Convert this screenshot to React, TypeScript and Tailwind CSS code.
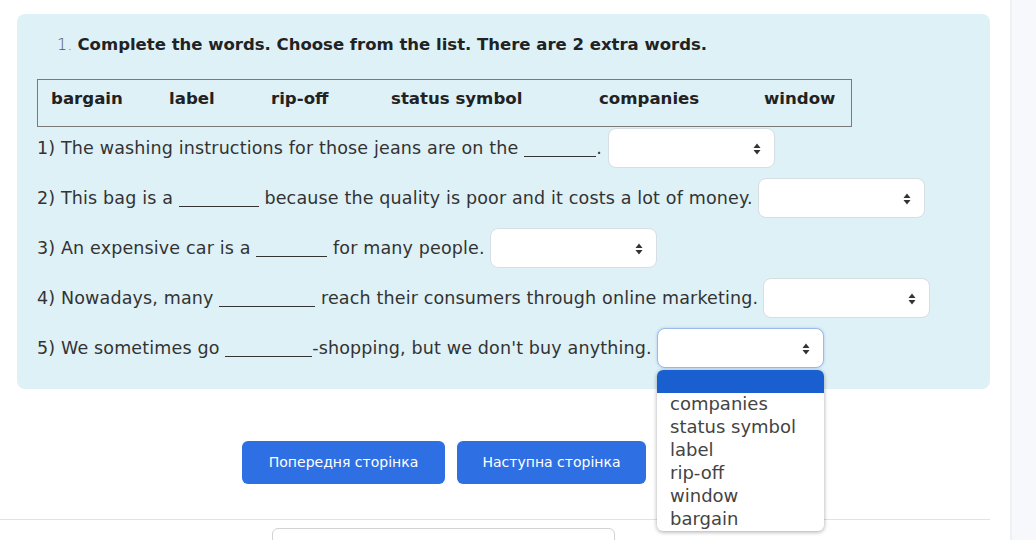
import React from "react";

const words = [
  { w: "bargain", width: "w-[118px]" },
  { w: "label", width: "w-[102px]" },
  { w: "rip-off", width: "w-[120px]" },
  { w: "status symbol", width: "w-[208px]" },
  { w: "companies", width: "w-[165px]" },
  { w: "window", width: "w-[74px]" },
];

function Arrows() {
  return (
    <svg width="8" height="12" viewBox="0 0 8 12" className="absolute right-[13px] top-[14px]">
      <path d="M4 0.5 L7.5 5 L0.5 5 Z" fill="#333" />
      <path d="M4 11.5 L7.5 7 L0.5 7 Z" fill="#333" />
    </svg>
  );
}

function Select({ focused = false }: { focused?: boolean }) {
  return (
    <span
      className={
        "relative inline-block shrink-0 w-[167px] h-[40px] rounded-lg bg-white align-middle border " +
        (focused ? "border-[#9fb9e6] shadow-[0_0_3px_rgba(80,130,220,0.35)]" : "border-[#d6dde3]")
      }
    >
      <Arrows />
    </span>
  );
}

function Blank({ w }: { w: string }) {
  return <span className={"inline-block shrink-0 border-b border-[#333] h-[18px] " + w}></span>;
}

export default function App() {
  return (
    <div className="relative w-[1036px] h-[540px] overflow-hidden bg-white flex font-['DejaVu_Sans',sans-serif] text-[#333]">
      <div className="w-[1010px] shrink-0 pt-[14px]">
        <div className="ml-[17px] w-[973px] h-[375px] rounded-lg bg-[#def1f7] px-5 pt-[22px]">
          <div className="pl-5 text-[16.5px] leading-[18px] whitespace-nowrap">
            <span className="font-light text-[#555] text-[16px]">1.</span>{" "}
            <span className="font-bold text-[#222]">Complete the words. Choose from the list. There are 2 extra words.</span>
          </div>
          <div className="mt-[25px] w-[815px] h-[48px] border border-[#7a7a7a] flex items-start pt-[9px] leading-[20px] pl-[13px] font-bold text-[16.6px] text-[#222] whitespace-nowrap">
            {words.map((x) => (
              <span key={x.w} className={x.width}>{x.w}</span>
            ))}
          </div>
          <div className="text-[17.5px] tracking-[0.15px] mt-[-4px] whitespace-nowrap">
            <div className="h-[50px] flex items-center">
              <span>1) The washing instructions for those jeans are on the&nbsp;</span>
              <Blank w="w-[72px]" />
              <span className="mr-[6px]">.</span>
              <Select />
            </div>
            <div className="h-[50px] flex items-center">
              <span>2) This bag is a&nbsp;</span>
              <Blank w="w-[80px]" />
              <span className="mr-[5px]">&nbsp;because the quality is poor and it costs a lot of money.</span>
              <Select />
            </div>
            <div className="h-[50px] flex items-center">
              <span>3) An expensive car is a&nbsp;</span>
              <Blank w="w-[71px]" />
              <span className="mr-[5px]">&nbsp;for many people.</span>
              <Select />
            </div>
            <div className="h-[50px] flex items-center">
              <span>4) Nowadays, many&nbsp;</span>
              <Blank w="w-[96px]" />
              <span className="mr-[5px]">&nbsp;reach their consumers through online marketing.</span>
              <Select />
            </div>
            <div className="h-[50px] flex items-center">
              <span>5) We sometimes go&nbsp;</span>
              <Blank w="w-[87px]" />
              <span className="mr-[5px]">-shopping, but we don't buy anything.</span>
              <Select focused />
            </div>
          </div>
        </div>
        <div className="mt-[52px] flex gap-3 pl-[242px]">
          <button className="w-[203px] h-[43px] rounded-md bg-[#2f6fe4] text-white text-[14px]">Попередня сторінка</button>
          <button className="w-[189px] h-[43px] rounded-md bg-[#2f6fe4] text-white text-[14px]">Наступна сторінка</button>
        </div>
        <div className="mt-[35px] w-[990px] border-t border-[#e2e2e2]"></div>
        <div className="mt-[8px] ml-[272px] w-[343px] h-[30px] rounded-md border border-[#d3d3d3]"></div>
      </div>
      <div className="flex-1 border-l-2 border-[#eef0f4] bg-[#f6f8fc]"></div>

      <div className="absolute left-[657px] top-[370px] w-[167px] h-[161px] rounded-md bg-white shadow-[0_1px_4px_rgba(0,0,0,0.35)] overflow-hidden text-[18px] leading-[23px] text-[#444]">
        <div className="h-[23px] bg-[#1a5fd0]"></div>
        <div className="pl-[13px] -mt-[1px]">
          <div>companies</div>
          <div>status symbol</div>
          <div>label</div>
          <div>rip-off</div>
          <div>window</div>
          <div>bargain</div>
        </div>
      </div>
    </div>
  );
}
